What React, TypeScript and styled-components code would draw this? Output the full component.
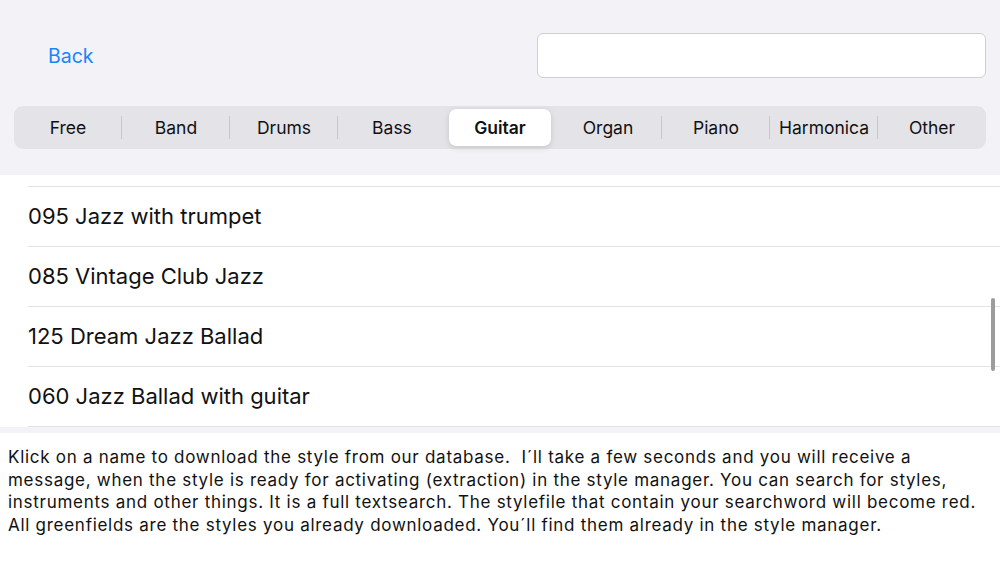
import React from "react";
import styled, { createGlobalStyle } from "styled-components";

const Global = createGlobalStyle`
  html, body { margin: 0; padding: 0; }
  body {
    width: 1000px; height: 563px; overflow: hidden;
    font-family: Inter, "Noto Sans", sans-serif;
    background: #ffffff;
    -webkit-font-smoothing: antialiased;
  }
`;

const Page = styled.div`
  display: flex;
  flex-direction: column;
  width: 1000px;
  height: 563px;
`;

const Header = styled.header`
  background: #f2f2f7;
  height: 175px;
  box-sizing: border-box;
  padding: 33px 14px 0 14px;
  display: flex;
  flex-direction: column;
`;

const TopRow = styled.div`
  display: flex;
  align-items: center;
  justify-content: space-between;
  height: 45px;
`;

const BackButton = styled.button`
  background: none;
  border: none;
  padding: 0;
  margin-left: 34px;
  font-family: inherit;
  font-size: 19.5px;
  color: #1a84ff;
  cursor: pointer;
  line-height: 1;
  padding-top: 2px;
`;

const SearchField = styled.input`
  width: 449px;
  height: 45px;
  box-sizing: border-box;
  border: 1px solid #cfcfd3;
  border-radius: 6px;
  background: #ffffff;
  outline: none;
  font-family: inherit;
  font-size: 17px;
  padding: 0 10px;
`;

const Segmented = styled.div`
  margin-top: 28px;
  height: 43px;
  box-sizing: border-box;
  background: #e3e3e8;
  border-radius: 9px;
  padding: 3px 0;
  display: grid;
  grid-template-columns: repeat(9, 1fr);
  align-items: stretch;
`;

const Segment = styled.div<{ $active?: boolean; $divider?: boolean }>`
  position: relative;
  display: flex;
  align-items: center;
  justify-content: center;
  font-size: 17.5px;
  color: #111;
  font-weight: ${(p) => (p.$active ? 600 : 400)};
  background: ${(p) => (p.$active ? "#ffffff" : "transparent")};
  margin: ${(p) => (p.$active ? "0 3px" : "0")};
  border-radius: 7px;
  box-shadow: ${(p) =>
    p.$active ? "0 2px 6px rgba(0,0,0,0.12), 0 0 1px rgba(0,0,0,0.08)" : "none"};
  &::before {
    content: "";
    position: absolute;
    left: -1px;
    top: 7px;
    bottom: 7px;
    width: 1px;
    background: ${(p) => (p.$divider ? "#c7c7cc" : "transparent")};
  }
`;

const List = styled.div`
  position: relative;
  height: 252px;
  background: #ffffff;
  display: flex;
  flex-direction: column;
  padding-top: 11px;
  box-sizing: border-box;
  overflow: hidden;
`;

const Row = styled.div`
  height: 60px;
  flex-shrink: 0;
  box-sizing: border-box;
  margin-left: 28px;
  padding-bottom: 2px;
  border-top: 1px solid #e3e3e6;
  display: flex;
  align-items: center;
  font-size: 22px;
  color: #111;
`;

const Scrollbar = styled.div`
  position: absolute;
  right: 5px;
  top: 123px;
  width: 4px;
  height: 73px;
  border-radius: 2px;
  background: #9c9c9c;
`;

const Gap = styled.div`
  height: 6px;
  background: #f2f2f7;
`;

const Info = styled.p`
  margin: 0;
  padding: 13px 8px 0 8px;
  font-size: 17px;
  letter-spacing: 0.72px;
  line-height: 22.5px;
  color: #111;
`;

const tabs = ["Free", "Band", "Drums", "Bass", "Guitar", "Organ", "Piano", "Harmonica", "Other"];
const active = 4;
const rows = [
  "095 Jazz with trumpet",
  "085 Vintage Club Jazz",
  "125 Dream Jazz Ballad",
  "060 Jazz Ballad with guitar",
  "",
];

export default function App() {
  return (
    <>
      <Global />
      <Page>
        <Header>
          <TopRow>
            <BackButton>Back</BackButton>
            <SearchField />
          </TopRow>
          <Segmented>
            {tabs.map((t, i) => (
              <Segment
                key={t}
                $active={i === active}
                $divider={i > 0 && i !== active && i !== active + 1}
              >
                {t}
              </Segment>
            ))}
          </Segmented>
        </Header>
        <List>
          {rows.map((r, i) => (
            <Row key={i}>{r}</Row>
          ))}
          <Scrollbar />
        </List>
        <Gap />
        <Info>
          Klick on a name to download the style from our database.&nbsp; I´ll take a few seconds and you will receive a message, when the style is ready for activating (extraction) in the style manager. You can search for styles, instruments and other things. It is a full textsearch. The stylefile that contain your searchword will become red. All greenfields are the styles you already downloaded. You´ll find them already in the style manager.
        </Info>
      </Page>
    </>
  );
}
